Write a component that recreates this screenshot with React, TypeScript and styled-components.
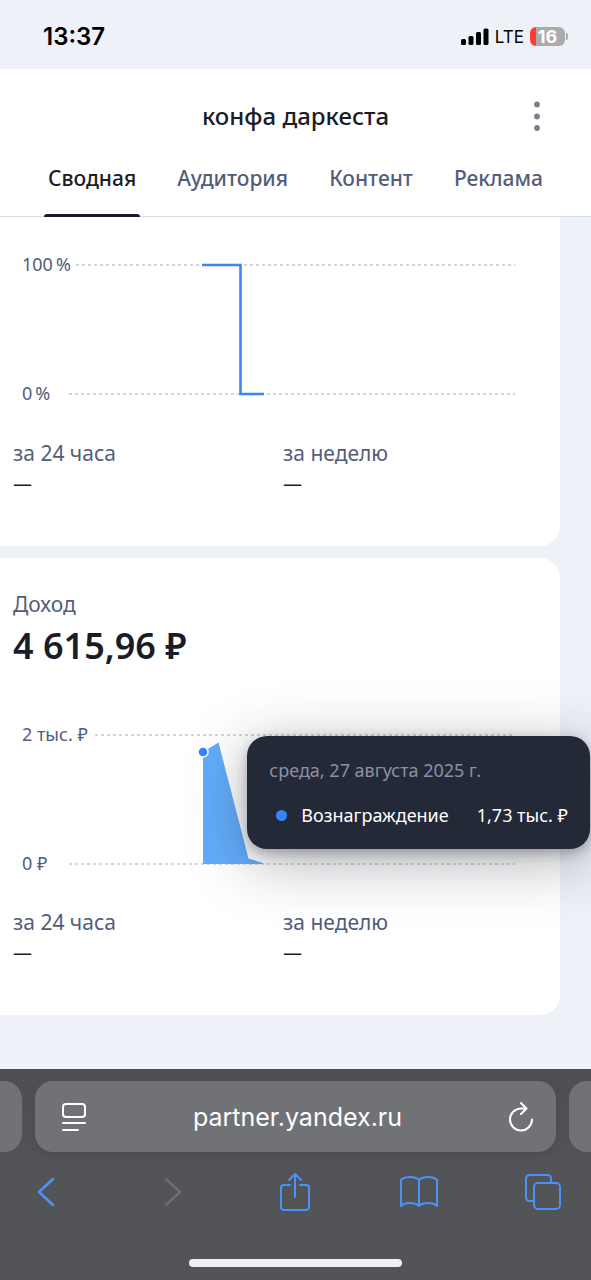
import React from "react";
import styled, { createGlobalStyle } from "styled-components";

const text = `"Noto Sans", "Open Sans", sans-serif`;
const system = `Inter, "Liberation Sans", sans-serif`;

const GlobalStyle = createGlobalStyle`
  *, *::before, *::after { box-sizing: border-box; }
  body { margin: 0; background: #eef1f7; font-family: ${text}; color: #1a1d28; }
  button, input { font: inherit; color: inherit; border: 0; background: none; padding: 0; margin: 0; }
  h1, h2, p, dl, dt, dd { margin: 0; font-weight: 400; }
  svg { display: block; }
`;

const Screen = styled.div`
  display: flex;
  flex-direction: column;
  min-height: 100vh;
  overflow-x: hidden;
`;

const StatusBar = styled.div`
  display: flex;
  align-items: center;
  justify-content: space-between;
  height: 69px;
  padding: 4px 26px 0 43px;
  font-family: ${system};
  color: #000;
`;

const Clock = styled.time`
  font-size: 24px;
  font-weight: 600;
`;

const Indicators = styled.div`
  display: flex;
  align-items: center;
  gap: 6px;
  font-size: 17px;
`;

const Battery = styled.div`
  position: relative;
  width: 35px;
  height: 19px;
  border-radius: 6px;
  background: linear-gradient(90deg, #fb3d33 6px, #ababae 6px);
  color: #fff;
  font-size: 18px;
  font-weight: 700;
  line-height: 19px;
  text-align: center;

  &::after {
    content: "";
    position: absolute;
    top: 6px;
    right: -3px;
    width: 2px;
    height: 7px;
    border-radius: 0 2px 2px 0;
    background: #ababae;
  }
`;

const Header = styled.header`
  border-bottom: 1px solid #d6dae2;
  background: #fff;
`;

const TitleRow = styled.div`
  display: grid;
  grid-template-columns: 34px 1fr 34px;
  align-items: center;
  padding: 30px 37px 0;
`;

const Title = styled.h1`
  grid-column: 2;
  font-size: 24px;
  font-weight: 500;
  line-height: 34px;
  text-align: center;
`;

const MenuButton = styled.button`
  display: grid;
  place-items: center;
  height: 34px;
`;

const Tabs = styled.nav`
  display: flex;
  justify-content: space-between;
  margin: 31px 44px -1px;
`;

const Tab = styled.button<{ $active?: boolean }>`
  position: relative;
  padding: 0 4px 25px;
  color: ${(p) => (p.$active ? "#1a1d28" : "#535d7b")};
  font-size: 21px;
  font-weight: 500;
  line-height: 28px;

  &::after {
    content: "";
    position: absolute;
    right: 0;
    bottom: 0;
    left: 0;
    height: 3px;
    border-radius: 3px 3px 0 0;
    background: ${(p) => (p.$active ? "#1a1d28" : "transparent")};
  }
`;

const Cards = styled.main`
  display: flex;
  flex-direction: column;
  gap: 12px;
  margin: 0 31px 54px 0;
`;

const Card = styled.section<{ $first?: boolean }>`
  padding: ${(p) => (p.$first ? "30px" : "32px")} 0 48px;
  border-radius: ${(p) => (p.$first ? "0 0 20px 0" : "0 20px 20px 0")};
  background: #fff;
`;

const Caption = styled.h2`
  padding-left: 13px;
  color: #535d7b;
  font-size: 21px;
  line-height: 28px;
`;

const Amount = styled.p`
  margin: 6px 0 48px;
  padding-left: 13px;
  font-size: 36px;
  font-weight: 600;
  line-height: 44px;
`;

const Plot = styled.div`
  position: relative;
`;

const Chart = styled.svg`
  width: 100%;
  height: auto;

  text {
    fill: #535d7b;
    font-family: ${text};
    font-size: 18px;
  }

  .grid {
    stroke: #d3d5da;
    stroke-width: 2;
    stroke-dasharray: 3 3;
  }
`;

const Tooltip = styled.div`
  position: absolute;
  top: 20px;
  right: -30px;
  padding: 20px 22px;
  border-radius: 20px;
  background: #242938;
  box-shadow: 0 12px 60px rgba(30, 32, 50, 0.36), 0 4px 12px rgba(30, 32, 50, 0.3);
  color: #fff;
  font-size: 18px;
  line-height: 28px;
  white-space: nowrap;
`;

const TooltipDate = styled.p`
  color: #8a90a8;
`;

const TooltipRow = styled.p`
  display: flex;
  align-items: center;
  margin-top: 17px;
`;

const Dot = styled.span`
  width: 11px;
  height: 11px;
  margin: 0 14px 0 7px;
  border-radius: 50%;
  background: #3385ff;
`;

const TooltipValue = styled.span`
  margin-left: auto;
  padding-left: 28px;
`;

const Stats = styled.dl`
  display: grid;
  grid-template-columns: 1fr 1fr;
  padding: 24px 7px 0 13px;
  line-height: 28px;
`;

const StatLabel = styled.dt`
  color: #535d7b;
  font-size: 21px;
`;

const StatValue = styled.dd`
  margin-top: 3px;
  font-size: 19px;
`;

const BrowserChrome = styled.footer`
  margin-top: auto;
  padding: 12px 0 13px;
  background: linear-gradient(#4e4f51, #535457 50%, #535458);
  color: #fff;
`;

const AddressRow = styled.div`
  display: flex;
  gap: 13px;
  height: 71px;
`;

const NeighbourTab = styled.div<{ $side: "left" | "right" }>`
  width: 22px;
  border-radius: ${(p) => (p.$side === "left" ? "0 18px 18px 0" : "18px 0 0 18px")};
  background: #717276;
`;

const AddressBar = styled.div`
  display: flex;
  flex: 1;
  align-items: center;
  min-width: 0;
  padding: 0 17px 0 21px;
  border-radius: 18px;
  background: #717276;
  box-shadow: 0 2px 10px rgba(0, 0, 0, 0.1);
`;

const Address = styled.input`
  flex: 1;
  min-width: 0;
  height: 40px;
  font-family: ${system};
  font-size: 25px;
  text-align: center;
`;

const IconButton = styled.button`
  display: grid;
  place-items: center;
  width: 48px;
  height: 48px;
  color: #4a92f7;

  &:disabled {
    color: #6c6d70;
  }
`;

const AddressButton = styled(IconButton)`
  width: 36px;
  color: #fff;
`;

const Toolbar = styled.nav`
  display: flex;
  align-items: center;
  justify-content: space-between;
  height: 80px;
  padding: 0 24px 0 22px;
`;

const HomeIndicator = styled.div`
  width: 36%;
  height: 8px;
  margin: 27px auto 0;
  border-radius: 4px;
  background: #f0f0f1;
`;

type IconProps = { w: number; h: number; sw?: number; children: React.ReactNode };

function Icon({ w, h, sw = 2, children }: IconProps) {
  return (
    <svg width={w} height={h} viewBox={`0 0 ${w} ${h}`} fill="none" stroke="currentColor"
      strokeWidth={sw} strokeLinecap="round" strokeLinejoin="round" aria-hidden="true">
      {children}
    </svg>
  );
}

function PeriodStats() {
  return (
    <Stats>
      <div>
        <StatLabel>за 24 часа</StatLabel>
        <StatValue>—</StatValue>
      </div>
      <div>
        <StatLabel>за неделю</StatLabel>
        <StatValue>—</StatValue>
      </div>
    </Stats>
  );
}

export default function App() {
  return (
    <Screen>
      <GlobalStyle />
      <StatusBar>
        <Clock>13:37</Clock>
        <Indicators>
          <svg width="28" height="18" viewBox="0 0 28 18" aria-hidden="true">
            <rect x="0" y="11" width="5" height="6" rx="1.5" />
            <rect x="7.5" y="8" width="5" height="9" rx="1.5" />
            <rect x="15" y="4" width="5" height="13" rx="1.5" />
            <rect x="22.5" y="0.5" width="5" height="16.5" rx="1.5" />
          </svg>
          <span>LTE</span>
          <Battery>16</Battery>
        </Indicators>
      </StatusBar>

      <Header>
        <TitleRow>
          <Title>конфа даркеста</Title>
          <MenuButton type="button" aria-label="Меню">
            <svg width="6" height="30" viewBox="0 0 6 30" fill="#76808f" aria-hidden="true">
              <circle cx="3" cy="3.5" r="2.9" />
              <circle cx="3" cy="15.5" r="2.9" />
              <circle cx="3" cy="27" r="2.9" />
            </svg>
          </MenuButton>
        </TitleRow>
        <Tabs>
          <Tab type="button" $active>Сводная</Tab>
          <Tab type="button">Аудитория</Tab>
          <Tab type="button">Контент</Tab>
          <Tab type="button">Реклама</Tab>
        </Tabs>
      </Header>

      <Cards>
        <Card $first>
          <Chart viewBox="0 0 560 168">
            <line className="grid" x1="76" y1="18" x2="515" y2="18" />
            <line className="grid" x1="69" y1="147" x2="515" y2="147" />
            <text x="22" y="24">{"100\u2009%"}</text>
            <text x="22" y="153">{"0\u2009%"}</text>
            <path d="M202 18H240.500V147H264" fill="none" stroke="#3b86f2" strokeWidth="2.600" />
          </Chart>
          <PeriodStats />
        </Card>

        <Card>
          <Caption>Доход</Caption>
          <Amount>4 615,96 ₽</Amount>
          <Plot>
            <Chart viewBox="0 0 560 168">
              <line className="grid" x1="95" y1="19" x2="515" y2="19" />
              <line className="grid" x1="69" y1="148" x2="515" y2="148" />
              <path d="M203 36L218.500 26.500L248.500 142.500L263 147V148H203Z" fill="#62adfa" />
              <circle cx="203" cy="36" r="5" fill="#3385ff" stroke="#fff" strokeWidth="1.500" />
              <text x="22" y="25">2 тыс. ₽</text>
              <text x="22" y="154">0 ₽</text>
            </Chart>
            <Tooltip role="tooltip">
              <TooltipDate>среда, 27 августа 2025 г.</TooltipDate>
              <TooltipRow>
                <Dot />
                <span>Вознаграждение</span>
                <TooltipValue>1,73 тыс. ₽</TooltipValue>
              </TooltipRow>
            </Tooltip>
          </Plot>
          <PeriodStats />
        </Card>
      </Cards>

      <BrowserChrome>
        <AddressRow>
          <NeighbourTab $side="left" />
          <AddressBar>
            <AddressButton type="button" aria-label="Параметры страницы">
              <Icon w={26} h={30}>
                <rect x="2" y="2" width="22" height="13" rx="3" />
                <path d="M2 21H24M2 28H17" />
              </Icon>
            </AddressButton>
            <Address aria-label="Адрес" defaultValue="partner.yandex.ru" />
            <AddressButton type="button" aria-label="Обновить">
              <Icon w={26} h={32}>
                <path d="M24 18.500A11 11 0 1 1 13 7.500H18.500M13 2L18.500 7.500L13 13" />
              </Icon>
            </AddressButton>
          </AddressBar>
          <NeighbourTab $side="right" />
        </AddressRow>
        <Toolbar>
          <IconButton type="button" aria-label="Назад">
            <Icon w={18} h={30} sw={2.5}><path d="M16 2L2 15L16 28" /></Icon>
          </IconButton>
          <IconButton type="button" aria-label="Вперёд" disabled>
            <Icon w={24} h={30} sw={2.5}><path d="M8 2L22 15L8 28" /></Icon>
          </IconButton>
          <IconButton type="button" aria-label="Поделиться">
            <Icon w={32} h={40}>
              <path d="M11 13H5Q2 13 2 16V35Q2 38 5 38H27Q30 38 30 35V16Q30 13 27 13H21M16 25V3M10 8L16 2L22 8" />
            </Icon>
          </IconButton>
          <IconButton type="button" aria-label="Закладки">
            <Icon w={40} h={34}>
              <path d="M20 5Q17 2 11 2Q5 2 2 5V31Q5 28 11 28Q17 28 20 31Q23 28 29 28Q35 28 38 31V5Q35 2 29 2Q23 2 20 5V31" />
            </Icon>
          </IconButton>
          <IconButton type="button" aria-label="Вкладки">
            <Icon w={38} h={38}>
              <path d="M10 28H6Q2 28 2 24V6Q2 2 6 2H23Q27 2 27 6V10" />
              <rect x="10" y="10" width="26" height="26" rx="4" />
            </Icon>
          </IconButton>
        </Toolbar>
        <HomeIndicator />
      </BrowserChrome>
    </Screen>
  );
}
